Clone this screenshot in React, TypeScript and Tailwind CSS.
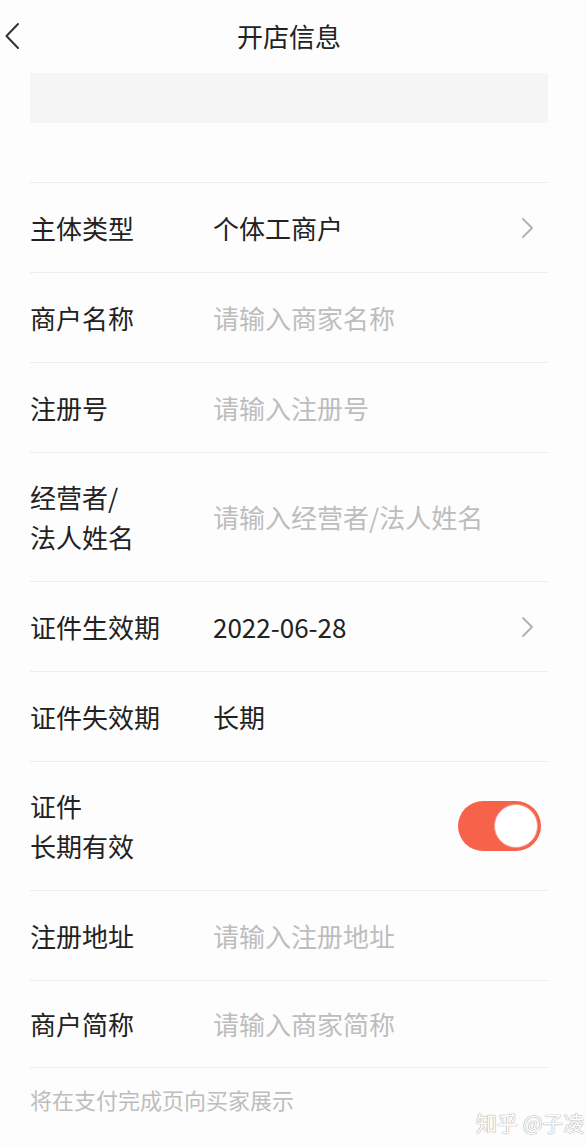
import React from "react";

const Chevron = () => (
  <svg width="14" height="22" viewBox="0 0 14 22" fill="none" className="shrink-0">
    <path d="M2 2 L11 11 L2 20" stroke="#b0b0b0" strokeWidth="1.8" strokeLinecap="round" strokeLinejoin="round" />
  </svg>
);

type RowProps = {
  label: React.ReactNode;
  value?: string;
  placeholder?: string;
  chevron?: boolean;
  toggle?: boolean;
  tall?: boolean;
  last?: boolean;
};

const Row = ({ label, value, placeholder, chevron, toggle, tall, last }: RowProps) => (
  <div
    className={`flex items-center border-t border-[#ededed] ${tall ? "h-[129px]" : last ? "h-[88px]" : "h-[90px]"} ${last ? "border-b" : ""}`}
  >
    <div className="w-[183px] shrink-0 text-[26px] leading-[40px] text-[#222]">{label}</div>
    <div className="flex-1 text-[26px] leading-[40px]">
      {value ? <span className="text-[#222]">{value}</span> : <span className="text-[#bdbdbd]">{placeholder}</span>}
    </div>
    {chevron && (
      <div className="pr-[13px]">
        <Chevron />
      </div>
    )}
    {toggle && (
      <div className="pr-[7px]">
        <div className="flex h-[50px] w-[83px] items-center justify-end rounded-full bg-[#f7624b] pr-[3px]">
          <div className="h-[44px] w-[44px] rounded-full border border-[#f0a090] bg-white" />
        </div>
      </div>
    )}
  </div>
);

export default function App() {
  return (
    <div
      className="relative min-h-[1146px] w-[586px] bg-[#fdfdfd]"
      style={{ fontFamily: '"Noto Sans CJK SC", "Noto Sans", sans-serif' }}
    >
      <div className="relative flex h-[70px] items-center justify-center pr-[8px]">
        <div className="absolute left-[4px] top-[22px]">
          <svg width="16" height="28" viewBox="0 0 16 28" fill="none">
            <path d="M14 2 L2.5 14 L14 26" stroke="#333" strokeWidth="2" strokeLinecap="round" strokeLinejoin="round" />
          </svg>
        </div>
        <div className="text-[26px] text-[#222]">开店信息</div>
      </div>
      <div className="ml-[30px] mt-[3px] h-[50px] w-[518px] bg-[#f5f5f5]" />
      <div className="ml-[30px] mt-[59px] w-[518px]">
        <Row label="主体类型" value="个体工商户" chevron />
        <Row label="商户名称" placeholder="请输入商家名称" />
        <Row label="注册号" placeholder="请输入注册号" />
        <Row
          tall
          label={
            <>
              经营者/
              <br />
              法人姓名
            </>
          }
          placeholder="请输入经营者/法人姓名"
        />
        <Row label="证件生效期" value="2022-06-28" chevron />
        <Row label="证件失效期" value="长期" />
        <Row
          tall
          label={
            <>
              证件
              <br />
              长期有效
            </>
          }
          toggle
        />
        <Row label="注册地址" placeholder="请输入注册地址" />
        <Row label="商户简称" placeholder="请输入商家简称" last />
        <div className="pt-[15px] text-[22px] leading-[32px] text-[#bdbdbd]">将在支付完成页向买家展示</div>
      </div>
      <div
        className="absolute left-[476px] top-[1106px] whitespace-nowrap text-[21px] leading-[32px] text-white"
        style={{ textShadow: "0 0 1px #999, 0 0 1px #999" }}
      >
        知乎 @子凌
      </div>
    </div>
  );
}
